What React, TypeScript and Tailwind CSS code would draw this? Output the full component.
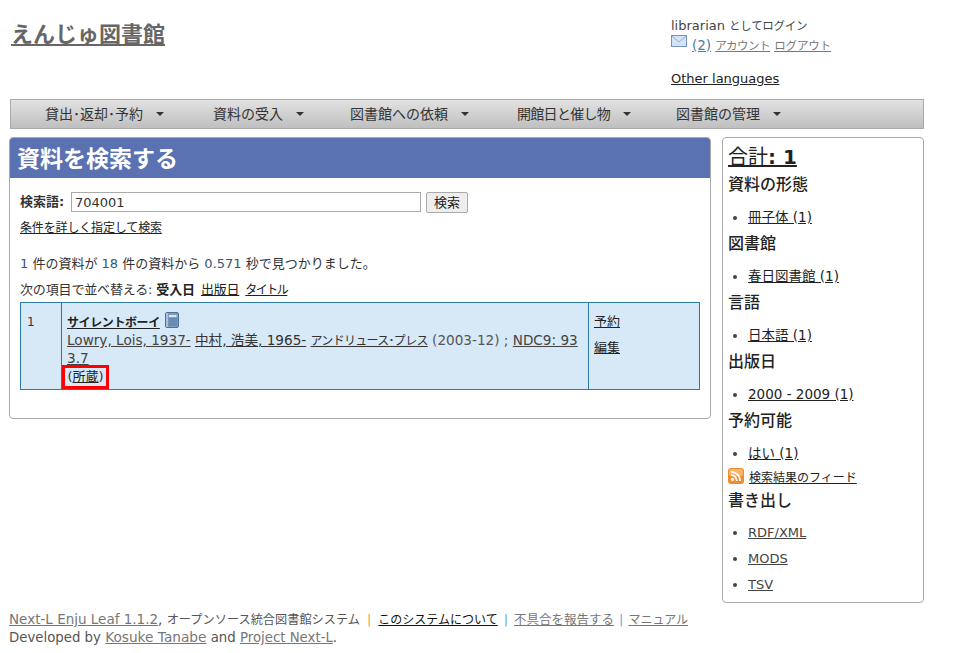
import React from 'react';

const fontStack = "font-['DejaVu_Sans','Noto_Sans_CJK_JP',sans-serif]";

const menuItems = [
  { label: '貸出･返却･予約', width: 'w-[168px]', labelClass: '' },
  { label: '資料の受入', width: 'w-[137px]', labelClass: '' },
  { label: '図書館への依頼', width: 'w-[167px]', labelClass: '' },
  { label: '開館日と催し物', width: 'w-[159px]', labelClass: 'tracking-[-0.7px]' },
  { label: '図書館の管理', width: 'w-[150px]', labelClass: '' },
];

const facets = [
  { title: '資料の形態', items: ['冊子体 (1)'] },
  { title: '図書館', items: ['春日図書館 (1)'] },
  { title: '言語', items: ['日本語 (1)'] },
  { title: '出版日', items: ['2000 - 2009 (1)'] },
  { title: '予約可能', items: ['はい (1)'] },
];

const MailIcon = () => (
  <svg width="16" height="12" viewBox="0 0 16 12" className="shrink-0">
    <rect x="0.5" y="0.5" width="15" height="11" fill="#d5e3f5" stroke="#6f93c4" />
    <path d="M1 1l7 6 7-6" fill="none" stroke="#8fb0da" />
  </svg>
);

const BookIcon = () => (
  <svg width="14" height="16" viewBox="0 0 14 16" className="-mt-[6px]">
    <rect x="0.5" y="0.5" width="13" height="15" rx="1.5" fill="#7d9cc2" stroke="#4f7097" />
    <rect x="1" y="1" width="2" height="14" fill="#a9c0da" />
    <rect x="4" y="3" width="7.5" height="2" fill="#dbe7f3" />
    <rect x="3.5" y="6" width="8.5" height="8" fill="#6b8bb3" />
  </svg>
);

const RssIcon = () => (
  <svg width="16" height="16" viewBox="0 0 16 16">
    <rect width="16" height="16" rx="3" fill="#f08c2c" />
    <rect x="1" y="1" width="14" height="7" rx="2" fill="#f8b56e" />
    <circle cx="4.5" cy="11.5" r="1.7" fill="#fff" />
    <path d="M3 7.2a5.8 5.8 0 0 1 5.8 5.8M3 3.8A9.2 9.2 0 0 1 12.2 13" fill="none" stroke="#fff" strokeWidth="1.8" />
  </svg>
);

export default function App() {
  return (
    <div className={`${fontStack} w-[972px] h-[653px] overflow-hidden bg-white text-[13px] leading-[18px] text-[#333]`}>
      {/* Header */}
      <div className="flex h-[99px]">
        <div className="w-[671px] pl-[11px] pt-[19px]">
          <a className="text-[22px] leading-[32px] font-bold text-[#666] underline">えんじゅ図書館</a>
        </div>
        <div className="pt-[17px]">
          <div className="text-[#444] h-[18px]">
            librarian <span className="text-[11.5px] tracking-[-0.3px]">としてログイン</span>
          </div>
          <div className="flex items-start gap-[5px] h-[18px] text-[#777]">
            <MailIcon />
            <span className="flex items-baseline gap-[4px] mt-[1px]">
              <a className="underline text-[#4a7cab] text-[13.5px]">(2)</a>
              <a className="underline text-[11.5px] tracking-[-0.5px]">アカウント</a>
              <a className="underline text-[11.5px] tracking-[-0.1px]">ログアウト</a>
            </span>
          </div>
          <div className="mt-[17px]">
            <a className="underline text-[#222]">Other languages</a>
          </div>
        </div>
      </div>

      {/* Nav */}
      <div className="ml-[10px] flex h-[30px] w-[914px] items-center border border-[#aaa] bg-linear-to-b from-[#e2e2e2] to-[#bfbfbf] pl-[34px] text-[14px] text-[#333]">
        {menuItems.map((item) => (
          <div key={item.label} className={`flex items-center gap-[13px] ${item.width}`}>
            <span className={item.labelClass}>{item.label}</span>
            <span className="h-0 w-0 border-x-[4px] border-t-[4px] border-x-transparent border-t-[#333]" />
          </div>
        ))}
      </div>

      <div className="mt-[8px] flex items-start">
        {/* Main panel */}
        <div className="ml-[9px] h-[282px] w-[702px] overflow-hidden rounded-[4px] border border-[#aaa]">
          <h1 className="h-[40px] bg-[#5a71b2] pl-[7px] text-[23px] leading-[42px] font-bold text-white">資料を検索する</h1>
          <div className="px-[10px] pt-[14px]">
            <div className="flex h-[20px] items-center">
              <label className="w-[44px] font-bold text-[#333] whitespace-nowrap">検索語:</label>
              <input
                readOnly
                value="704001"
                className="ml-[7px] h-[20px] w-[350px] border border-[#aaa] px-[3px] text-[13px] text-[#333] outline-none"
              />
              <button className="ml-[5px] mt-[1px] h-[21px] w-[42px] rounded-[2px] border border-[#aaa] bg-[#eee] text-[13px] text-[#222]">検索</button>
            </div>
            <div className="mt-[7px]">
              <a className="underline text-[#222] text-[12px] tracking-[-0.15px]">条件を詳しく指定して検索</a>
            </div>
            <p className="mt-[18px] h-[18px] text-[#333]">
              <span className="text-[#34567a]">1</span> 件の資料が <span className="text-[#34567a]">18</span> 件の資料から <span className="text-[#34567a]">0.571</span> 秒で見つかりました。
            </p>
            <p className="mt-[8px] flex h-[18px] gap-[6px] text-[#333]">
              <span className="tracking-[-0.15px]">次の項目で並べ替える: <strong className="text-[#222]">受入日</strong></span>
              <a className="underline text-[#222] tracking-[-0.2px]">出版日</a>
              <a className="underline text-[#222] text-[12px] tracking-[-1.5px]">タイトル</a>
            </p>
            <table className="mt-[3px] w-[680px] table-fixed border-collapse bg-[#d7e9f7]">
              <tbody>
                <tr className="h-[87px] align-top">
                  <td className="w-[41px] border border-[#2a7aa5] pl-[6px] pt-[10px] text-[12px]">1</td>
                  <td className="border border-[#2a7aa5] pl-[5px] pt-[11px]">
                    <div className="flex h-[18px] items-center gap-[5px]">
                      <a className="font-bold underline text-[#222] text-[12px] tracking-[-0.4px]">サイレントボーイ</a>
                      <BookIcon />
                    </div>
                    <div className="whitespace-nowrap text-[13.6px] leading-[17px]">
                      <a className="underline text-[#444]">Lowry, Lois, 1937-</a> <a className="underline text-[#333]">中村, 浩美, 1965-</a>{' '}
                      <a className="underline text-[#333] text-[12px] tracking-[-0.7px]">アンドリュース･プレス</a> <span className="text-[#555]">(2003-12) ; </span>
                      <a className="underline text-[#444]">NDC9: 93</a>
                      <br />
                      <a className="underline text-[#444]">3.7</a>
                    </div>
                    <div className="-ml-[5px] -mt-[2px] h-[24px] w-fit border-[3px] border-[#f00] px-[2.5px] text-[13px] leading-[18px]">
                      (<a className="underline text-[#222]">所蔵</a>)
                    </div>
                  </td>
                  <td className="w-[111px] border border-[#2a7aa5] pl-[5px] pt-[10px]">
                    <a className="block underline text-[#222]">予約</a>
                    <a className="mt-[8px] block underline text-[#222]">編集</a>
                  </td>
                </tr>
              </tbody>
            </table>
          </div>
        </div>

        {/* Sidebar */}
        <div className="ml-[11px] h-[466px] w-[202px] rounded-[4px] border border-[#aaa] pl-[5px] pt-[9px]">
          <div className="h-[22px] text-[20px] leading-[20px] text-[#222]">
            <span className="underline">合計<strong>: 1</strong></span>
          </div>
          {facets.map((facet) => (
            <div key={facet.title}>
              <h3 className="mt-[4px] h-[24px] text-[16px] leading-[24px] font-medium text-[#222]">{facet.title}</h3>
              <ul className="mt-[11px] pl-[20px] list-disc h-[20px] text-[13.5px] marker:text-[#444]">
                {facet.items.map((item) => (
                  <li key={item}>
                    <a className="underline text-[#222]">{item}</a>
                  </li>
                ))}
              </ul>
            </div>
          ))}
          <div className="flex h-[18px] items-start gap-[5px] mt-[4px]">
            <RssIcon />
            <a className="mt-[1px] underline text-[#222] text-[12px]">検索結果のフィード</a>
          </div>
          <h3 className="mt-[3px] h-[24px] text-[16px] leading-[24px] font-medium text-[#222]">書き出し</h3>
          <ul className="mt-[11px] list-disc pl-[20px] space-y-[8px] marker:text-[#444]">
            <li><a className="underline text-[#444]">RDF/XML</a></li>
            <li><a className="underline text-[#444]">MODS</a></li>
            <li><a className="underline text-[#444]">TSV</a></li>
          </ul>
        </div>
      </div>

      {/* Footer: starts right under the sidebar */}
      <div className="mt-[7px] ml-[9px] text-[#555] text-[13.5px]">
        <div className="h-[18px]">
          <a className="underline text-[#777]">Next-L Enju Leaf 1.1.2</a>, <span className="text-[12.2px]">オープンソース統合図書館システム</span>
          <span className="mx-[7px] text-[13px] text-[#e3a04f]">|</span>
          <a className="underline text-[#111] text-[12px]">このシステムについて</a>
          <span className="mx-[6px] text-[13px] text-[#6fa6cf]">|</span>
          <a className="underline text-[#777] text-[12.5px]">不具合を報告する</a>
          <span className="mx-[5px] text-[13px] text-[#6fa6cf]">|</span>
          <a className="underline text-[#777] text-[12px]">マニュアル</a>
        </div>
        <div className="h-[18px] text-[13.3px]">
          Developed by <a className="underline text-[#777] text-[13.7px]">Kosuke Tanabe</a> and <a className="underline text-[#777]">Project Next-L</a>.
        </div>
      </div>
    </div>
  );
}
